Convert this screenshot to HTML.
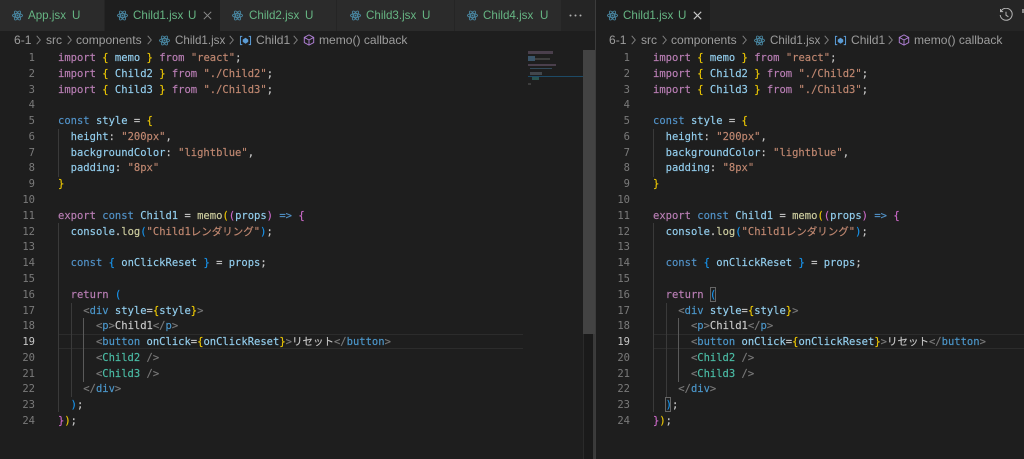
<!DOCTYPE html>
<html lang="ja"><head><meta charset="utf-8"><title>Child1.jsx</title>
<style>
html,body{margin:0;padding:0;background:#1e1e1e}
body{position:relative;width:1024px;height:459px;overflow:hidden}
div,span.a{box-sizing:border-box}
.a{position:absolute;white-space:pre}
.tab{position:absolute;top:0;height:31px;background:#2b2b2b;border-right:1px solid #252525}
.tn{font:11.6px/31px "Liberation Sans",sans-serif;color:#66b583;top:0}
.ic{position:absolute;top:10px;width:11px;height:11px}
.bc{font:12.05px/16px "Liberation Sans",sans-serif;color:#9d9d9d;top:32px}
.bc.bj{font-size:11.6px;top:33px}
.sep{position:absolute;top:35px;width:5px;height:10px}
.code{position:absolute;top:51px;font:10.5px/15.78px "DejaVu Sans Mono","Noto Sans CJK JP",monospace;color:#d4d4d4;white-space:pre;-webkit-text-stroke:.15px;opacity:.93}
.nums{position:absolute;top:51px;width:30px;text-align:right;font:10.5px/15.78px "DejaVu Sans Mono",monospace;color:#7a7a7a;white-space:pre}
.nums b{font-weight:400;color:#c6c6c6}
.g{position:absolute;width:1px;background:#3a3a3a}
.g2{background:#5a5a5a}
.hl{position:absolute;top:334px;height:15px;border-top:1px solid #2c2c2c;border-bottom:1px solid #2c2c2c}
.k{color:#c586c0}.v{color:#9cdcfe}.s{color:#ce9178}.c{color:#569cd6}.y{color:#ffd700}.o{color:#da70d6}.b{color:#179fff}.t{color:#808080}.n{color:#4ec9b0}.f{color:#dcdcaa}.l{color:#4fa0d8}.m{color:#a0a0a0}
.mm{position:absolute;height:1px}
</style></head><body>
<svg width="0" height="0" style="position:absolute"><defs>
<symbol id="r" viewBox="0 0 24 24"><g fill="none" stroke="#4b8ca8" stroke-width="1.8"><ellipse cx="12" cy="12" rx="11" ry="4.4"/><ellipse cx="12" cy="12" rx="11" ry="4.4" transform="rotate(60 12 12)"/><ellipse cx="12" cy="12" rx="11" ry="4.4" transform="rotate(120 12 12)"/></g><circle cx="12" cy="12" r="2.2" fill="#4b8ca8"/></symbol>
<symbol id="sq" viewBox="0 0 14 12"><path d="M3.5 1.5H1.5V10.5H3.5M10.5 1.5H12.5V10.5H10.5" fill="none" stroke="#5a9bd5" stroke-width="1.1"/><path d="M7 3L10 5V7.5L7 9.5L4 7.5V5Z" fill="#5a9bd5"/></symbol>
<symbol id="cube" viewBox="0 0 14 14"><path d="M7 1L12.5 4V10L7 13L1.5 10V4ZM1.5 4L7 7L12.5 4M7 7V13" fill="none" stroke="#b180d7" stroke-width="1.1"/></symbol>
<symbol id="chev" viewBox="0 0 5 10"><path d="M.7 .8L4.3 5L.7 9.2" fill="none" stroke="#858585" stroke-width=".9"/></symbol>
</defs></svg>

<!-- left tabs -->
<div class="a" style="left:0;top:0;width:595px;height:31px;background:#252525"></div>
<div class="tab" style="left:0;width:105px"></div>
<div class="tab" style="left:105px;width:115px;background:#1e1e1e;border:0"></div>
<div class="tab" style="left:220px;width:117px"></div>
<div class="tab" style="left:337px;width:118px"></div>
<div class="tab" style="left:455px;width:107px"></div>
<svg class="ic" style="left:12px"><use href="#r"/></svg><span class="a tn" style="left:28px">App.jsx</span><span class="a tn" style="left:72px">U</span>
<svg class="ic" style="left:117px"><use href="#r"/></svg><span class="a tn" style="left:133px">Child1.jsx</span><span class="a tn" style="left:188px">U</span>
<svg class="a" style="left:203px;top:11px" width="9" height="9"><path d="M.8 .8L8.2 8.2M8.2 .8L.8 8.2" stroke="#8a8a8a" stroke-width="1"/></svg>
<svg class="ic" style="left:232px"><use href="#r"/></svg><span class="a tn" style="left:249px">Child2.jsx</span><span class="a tn" style="left:305px">U</span>
<svg class="ic" style="left:350px"><use href="#r"/></svg><span class="a tn" style="left:366px">Child3.jsx</span><span class="a tn" style="left:422px">U</span>
<svg class="ic" style="left:467px"><use href="#r"/></svg><span class="a tn" style="left:483px">Child4.jsx</span><span class="a tn" style="left:540px">U</span>
<svg class="a" style="left:569px;top:14px" width="13" height="3"><circle cx="1.5" cy="1.5" r="1" fill="#b0b0b0"/><circle cx="6.5" cy="1.5" r="1" fill="#b0b0b0"/><circle cx="11.5" cy="1.5" r="1" fill="#b0b0b0"/></svg>

<!-- left breadcrumb -->
<span class="a bc" style="left:14px">6-1</span><svg class="sep" style="left:36px"><use href="#chev"/></svg>
<span class="a bc" style="left:46px">src</span><svg class="sep" style="left:67px"><use href="#chev"/></svg>
<span class="a bc" style="left:76px">components</span><svg class="sep" style="left:147px"><use href="#chev"/></svg>
<svg class="a" style="left:159px;top:35px" width="11" height="11"><use href="#r"/></svg><span class="a bc bj" style="left:175px">Child1.jsx</span><svg class="sep" style="left:229px"><use href="#chev"/></svg>
<svg class="a" style="left:239px;top:35px" width="13" height="11"><use href="#sq"/></svg><span class="a bc" style="left:256px">Child1</span><svg class="sep" style="left:293px"><use href="#chev"/></svg>
<svg class="a" style="left:303px;top:34px" width="12" height="12"><use href="#cube"/></svg><span class="a bc" style="left:319px">memo() callback</span>

<!-- left editor -->
<div class="hl" style="left:58px;width:465px"></div>
<div class="g" style="left:58px;top:129px;height:48px"></div>
<div class="g" style="left:58px;top:223px;height:189px"></div>
<div class="g" style="left:71px;top:303px;height:94px"></div>
<div class="g g2" style="left:83px;top:318px;height:64px"></div>
<div class="nums" style="left:5px">1
2
3
4
5
6
7
8
9
10
11
12
13
14
15
16
17
18
<b>19</b>
20
21
22
23
24</div>
<div class="code" style="left:58px"><span class="k">import</span> <span class="y">{</span> <span class="v">memo</span> <span class="y">}</span> <span class="k">from</span> <span class="s">"react"</span>;
<span class="k">import</span> <span class="y">{</span> <span class="v">Child2</span> <span class="y">}</span> <span class="k">from</span> <span class="s">"./Child2"</span>;
<span class="k">import</span> <span class="y">{</span> <span class="v">Child3</span> <span class="y">}</span> <span class="k">from</span> <span class="s">"./Child3"</span>;

<span class="c">const</span> <span class="v">style</span> = <span class="y">{</span>
  <span class="v">height</span>: <span class="s">"200px"</span>,
  <span class="v">backgroundColor</span>: <span class="s">"lightblue"</span>,
  <span class="v">padding</span>: <span class="s">"8px"</span>
<span class="y">}</span>

<span class="k">export</span> <span class="c">const</span> <span class="v">Child1</span> = <span class="f">memo</span><span class="y">(</span><span class="o">(</span><span class="v">props</span><span class="o">)</span> <span class="c">=&gt;</span> <span class="o">{</span>
  <span class="v">console</span>.<span class="f">log</span><span class="b">(</span><span class="s">"Child1レンダリング"</span><span class="b">)</span>;

  <span class="c">const</span> <span class="b">{</span> <span class="v">onClickReset</span> <span class="b">}</span> = <span class="v">props</span>;

  <span class="k">return</span> <span class="b">(</span>
    <span class="t">&lt;</span><span class="l">div</span> <span class="v">style</span>=<span class="y">{</span><span class="v">style</span><span class="y">}</span><span class="t">&gt;</span>
      <span class="t">&lt;</span><span class="l">p</span><span class="t">&gt;</span>Child1<span class="t">&lt;/</span><span class="l">p</span><span class="t">&gt;</span>
      <span class="t">&lt;</span><span class="l">button</span> <span class="v">onClick</span>=<span class="y">{</span><span class="v">onClickReset</span><span class="y">}</span><span class="t">&gt;</span>リセット<span class="t">&lt;/</span><span class="l">button</span><span class="t">&gt;</span>
      <span class="t">&lt;</span><span class="n">Child2</span> <span class="t">/&gt;</span>
      <span class="t">&lt;</span><span class="n">Child3</span> <span class="t">/&gt;</span>
    <span class="t">&lt;/</span><span class="l">div</span><span class="t">&gt;</span>
  <span class="b">)</span>;
<span class="o">}</span><span class="y">)</span>;</div>

<!-- minimap -->
<div class="mm" style="left:528px;top:51px;width:25px;height:3px;background:#4a3f4c"></div>
<div class="mm" style="left:528px;top:56px;width:7px;height:5px;background:#3a5468"></div>
<div class="mm" style="left:535px;top:58px;width:15px;height:2px;background:#3e3e3e"></div>
<div class="mm" style="left:528px;top:64px;width:28px;height:2px;background:#4a3f4c"></div>
<div class="mm" style="left:530px;top:68px;width:22px;height:1px;background:#334a5a"></div>
<div class="mm" style="left:530px;top:72px;width:12px;height:3px;background:#42474c"></div>
<div class="mm" style="left:528px;top:76px;width:55px;height:1px;background:#1d4a66"></div>
<div class="mm" style="left:532px;top:77px;width:7px;height:3px;background:#2a5450"></div>
<div class="mm" style="left:528px;top:83px;width:3px;height:2px;background:#3c3c3c"></div>

<!-- scrollbar/divider -->
<div class="a" style="left:583px;top:334px;width:12px;height:125px;background:#1a1a1a;border-left:1px solid #2a2a2a;border-right:2px solid #3a3a3a"></div>
<div class="a" style="left:583px;top:50px;width:12px;height:284px;background:#434343"></div>
<div class="a" style="left:595px;top:0;width:1px;height:459px;background:#3c3c3c"></div>

<!-- right tabs -->
<div class="a" style="left:596px;top:0;width:428px;height:31px;background:#252525"></div>
<div class="tab" style="left:596px;width:114px;background:#1e1e1e;border:0"></div>
<svg class="ic" style="left:607px"><use href="#r"/></svg><span class="a tn" style="left:623px">Child1.jsx</span><span class="a tn" style="left:678px">U</span>
<svg class="a" style="left:693px;top:11px" width="9" height="9"><path d="M.8 .8L8.2 8.2M8.2 .8L.8 8.2" stroke="#c8c8c8" stroke-width="1.1"/></svg>
<svg class="a" style="left:999px;top:8px" width="14" height="14" viewBox="0 0 14 14"><path d="M2 3.2A6 6 0 1 1 1.2 7M1.5 1V3.6H4.1M7 3.8V7.2L9.4 8.8" fill="none" stroke="#b4b4b4" stroke-width="1"/></svg>
<div class="a" style="left:1022px;top:9px;width:2px;height:4px;background:#8a8a8a"></div>

<!-- right breadcrumb -->
<span class="a bc" style="left:609px">6-1</span><svg class="sep" style="left:631px"><use href="#chev"/></svg>
<span class="a bc" style="left:641px">src</span><svg class="sep" style="left:662px"><use href="#chev"/></svg>
<span class="a bc" style="left:671px">components</span><svg class="sep" style="left:742px"><use href="#chev"/></svg>
<svg class="a" style="left:754px;top:35px" width="11" height="11"><use href="#r"/></svg><span class="a bc bj" style="left:770px">Child1.jsx</span><svg class="sep" style="left:824px"><use href="#chev"/></svg>
<svg class="a" style="left:834px;top:35px" width="13" height="11"><use href="#sq"/></svg><span class="a bc" style="left:851px">Child1</span><svg class="sep" style="left:888px"><use href="#chev"/></svg>
<svg class="a" style="left:898px;top:34px" width="12" height="12"><use href="#cube"/></svg><span class="a bc" style="left:914px">memo() callback</span>

<!-- right editor -->
<div class="hl" style="left:653px;width:371px"></div>
<div class="g" style="left:653px;top:129px;height:48px"></div>
<div class="g" style="left:653px;top:223px;height:189px"></div>
<div class="g" style="left:666px;top:303px;height:94px"></div>
<div class="g g2" style="left:678px;top:318px;height:64px"></div>
<div class="a" style="left:710px;top:287px;width:6px;height:15px;border:1px solid #666"></div>
<div class="a" style="left:665px;top:397px;width:6px;height:15px;border:1px solid #666"></div>
<div class="nums" style="left:600px">1
2
3
4
5
6
7
8
9
10
11
12
13
14
15
16
17
18
<b>19</b>
20
21
22
23
24</div>
<div class="code" style="left:653px"><span class="k">import</span> <span class="y">{</span> <span class="v">memo</span> <span class="y">}</span> <span class="k">from</span> <span class="s">"react"</span>;
<span class="k">import</span> <span class="y">{</span> <span class="v">Child2</span> <span class="y">}</span> <span class="k">from</span> <span class="s">"./Child2"</span>;
<span class="k">import</span> <span class="y">{</span> <span class="v">Child3</span> <span class="y">}</span> <span class="k">from</span> <span class="s">"./Child3"</span>;

<span class="c">const</span> <span class="v">style</span> = <span class="y">{</span>
  <span class="v">height</span>: <span class="s">"200px"</span>,
  <span class="v">backgroundColor</span>: <span class="s">"lightblue"</span>,
  <span class="v">padding</span>: <span class="s">"8px"</span>
<span class="y">}</span>

<span class="k">export</span> <span class="c">const</span> <span class="v">Child1</span> = <span class="f">memo</span><span class="y">(</span><span class="o">(</span><span class="v">props</span><span class="o">)</span> <span class="c">=&gt;</span> <span class="o">{</span>
  <span class="v">console</span>.<span class="f">log</span><span class="b">(</span><span class="s">"Child1レンダリング"</span><span class="b">)</span>;

  <span class="c">const</span> <span class="b">{</span> <span class="v">onClickReset</span> <span class="b">}</span> = <span class="v">props</span>;

  <span class="k">return</span> <span class="b">(</span>
    <span class="t">&lt;</span><span class="l">div</span> <span class="v">style</span>=<span class="y">{</span><span class="v">style</span><span class="y">}</span><span class="t">&gt;</span>
      <span class="t">&lt;</span><span class="l">p</span><span class="t">&gt;</span>Child1<span class="t">&lt;/</span><span class="l">p</span><span class="t">&gt;</span>
      <span class="t">&lt;</span><span class="l">button</span> <span class="v">onClick</span>=<span class="y">{</span><span class="v">onClickReset</span><span class="y">}</span><span class="t">&gt;</span>リセット<span class="t">&lt;/</span><span class="l">button</span><span class="t">&gt;</span>
      <span class="t">&lt;</span><span class="n">Child2</span> <span class="t">/&gt;</span>
      <span class="t">&lt;</span><span class="n">Child3</span> <span class="t">/&gt;</span>
    <span class="t">&lt;/</span><span class="l">div</span><span class="t">&gt;</span>
  <span class="b">)</span>;
<span class="o">}</span><span class="y">)</span>;</div>
</body></html>
